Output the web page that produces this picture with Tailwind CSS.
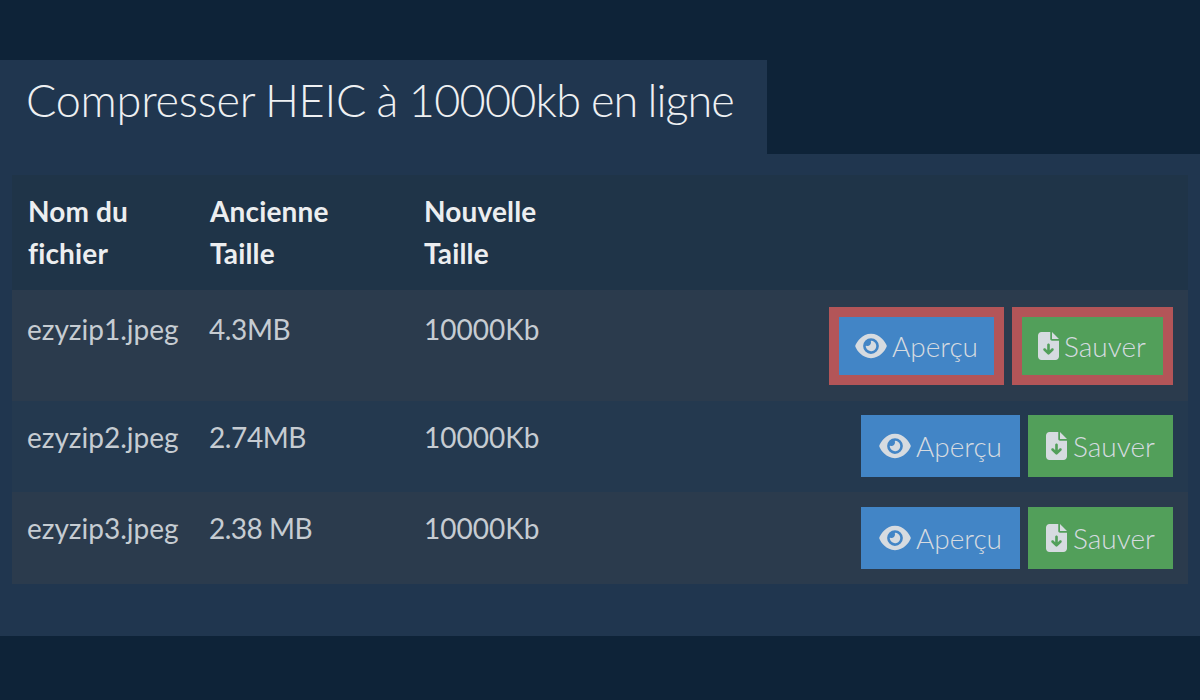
<!DOCTYPE html>
<html lang="fr">
<head>
<meta charset="UTF-8">
<meta name="viewport" content="width=device-width, initial-scale=1.0">
<script src="https://cdn.jsdelivr.net/npm/@tailwindcss/browser@4"></script>
<title>Compresser HEIC</title>
</head>
<body class="h-[700px] overflow-hidden bg-[#0e2338] font-['Lato',sans-serif] pt-[60px]">
  <h1 class="w-[767px] h-[94px] pl-[26px] pt-[12px] bg-[#20364f] text-[45px] leading-[56px] [word-spacing:-1.5px] font-light text-[#eef0f2]"><span class="tracking-[-0.25px]">Compresser HEIC à</span> <span class="tracking-[-0.75px]">10000kb</span> <span class="tracking-[-1px] [word-spacing:-1px]">en ligne</span></h1>
  <div class="bg-[#20364f] h-[482px] px-[12px] pt-[21px]">
    <table class="w-[1176px] table-fixed border-collapse text-[28px] text-[#c6ccd2]">
      <thead>
        <tr class="h-[115px] bg-[#1f3448] text-left text-[#eceef0] font-bold leading-[42px] tracking-[0.15px]">
          <th class="w-[197px] pl-[16px] pr-[40px] pb-[2px] font-bold">Nom du fichier</th>
          <th class="w-[215px] pl-[1px] pr-[60px] pb-[2px] font-bold">Ancienne Taille</th>
          <th class="w-[200px] pr-[40px] pb-[2px] font-bold">Nouvelle Taille</th>
          <th></th>
        </tr>
      </thead>
      <tbody>
        <tr class="h-[111px] bg-[#2b3b4d] align-top">
          <td class="pl-[15px] pt-[19px] leading-[40px]">ezyzip1.jpeg</td>
          <td class="pt-[19px] leading-[40px] tracking-[-0.4px]">4.3MB</td>
          <td class="pt-[19px] leading-[40px]">10000Kb</td>
          <td class="pr-[15px] pt-[17px]">
            <div class="flex justify-end gap-[8px] text-[#d6dbe0]">
              <a class="flex items-center gap-[5px] w-[175px] h-[78px] pl-[16px] border-[10px] border-[#b35558] bg-[#4285c6] font-light">
                <svg class="w-[32px] h-[28px] fill-current" viewBox="0 0 576 512"><path d="M288 32c-80.8 0-145.5 36.8-192.6 80.6C48.6 156 17.3 208 2.5 243.7c-3.3 7.9-3.3 16.7 0 24.6C17.3 304 48.6 356 95.4 399.4C142.5 443.2 207.2 480 288 480s145.5-36.8 192.6-80.6c46.8-43.5 78.1-95.4 93-131.1c3.3-7.9 3.3-16.7 0-24.6c-14.9-35.7-46.2-87.7-93-131.1C433.5 68.8 368.8 32 288 32zM144 256a144 144 0 1 1 288 0 144 144 0 1 1 -288 0zm144-64c0 35.3-28.7 64-64 64c-7.1 0-13.9-1.2-20.3-3.3c-5.5-1.8-11.9 1.6-11.7 7.4c.3 6.9 1.3 13.8 3.2 20.7c13.7 51.2 66.4 81.6 117.6 67.9s81.6-66.4 67.9-117.6c-11.1-41.5-47.8-69.4-88.6-71.1c-5.8-.2-9.2 6.1-7.4 11.7c2.1 6.4 3.3 13.2 3.3 20.3z"/></svg>
                Aperçu
              </a>
              <a class="flex items-center gap-[5px] w-[161px] h-[78px] pl-[16px] border-[10px] border-[#b35558] bg-[#529f5a] font-light">
                <svg class="w-[21px] h-[28px] fill-current" viewBox="0 0 384 512"><path d="M64 0C28.7 0 0 28.7 0 64V448c0 35.3 28.7 64 64 64H320c35.3 0 64-28.7 64-64V160H256c-17.7 0-32-14.3-32-32V0H64zM256 0V128H384L256 0zM216 232V334.1l31-31c9.4-9.4 24.6-9.4 33.9 0s9.4 24.6 0 33.9l-72 72c-9.4 9.4-24.6 9.4-33.9 0l-72-72c-9.4-9.4-9.4-24.6 0-33.9s24.6-9.4 33.9 0l31 31V232c0-13.3 10.7-24 24-24s24 10.7 24 24z"/></svg>
                Sauver
              </a>
            </div>
          </td>
        </tr>
        <tr class="h-[91px] bg-[#24394f] align-top">
          <td class="pl-[15px] pt-[16px] leading-[40px]">ezyzip2.jpeg</td>
          <td class="pt-[16px] leading-[40px] tracking-[-0.4px]">2.74MB</td>
          <td class="pt-[16px] leading-[40px]">10000Kb</td>
          <td class="pr-[15px] pt-[14px]">
            <div class="flex justify-end gap-[8px] text-[#d6dbe0]">
              <a class="flex items-center gap-[5px] w-[159px] h-[62px] pl-[18px] bg-[#4285c6] font-light">
                <svg class="w-[32px] h-[28px] fill-current" viewBox="0 0 576 512"><path d="M288 32c-80.8 0-145.5 36.8-192.6 80.6C48.6 156 17.3 208 2.5 243.7c-3.3 7.9-3.3 16.7 0 24.6C17.3 304 48.6 356 95.4 399.4C142.5 443.2 207.2 480 288 480s145.5-36.8 192.6-80.6c46.8-43.5 78.1-95.4 93-131.1c3.3-7.9 3.3-16.7 0-24.6c-14.9-35.7-46.2-87.7-93-131.1C433.5 68.8 368.8 32 288 32zM144 256a144 144 0 1 1 288 0 144 144 0 1 1 -288 0zm144-64c0 35.3-28.7 64-64 64c-7.1 0-13.9-1.2-20.3-3.3c-5.5-1.8-11.9 1.6-11.7 7.4c.3 6.9 1.3 13.8 3.2 20.7c13.7 51.2 66.4 81.6 117.6 67.9s81.6-66.4 67.9-117.6c-11.1-41.5-47.8-69.4-88.6-71.1c-5.8-.2-9.2 6.1-7.4 11.7c2.1 6.4 3.3 13.2 3.3 20.3z"/></svg>
                Aperçu
              </a>
              <a class="flex items-center gap-[6px] w-[145px] h-[62px] pl-[18px] bg-[#529f5a] font-light">
                <svg class="w-[21px] h-[28px] fill-current" viewBox="0 0 384 512"><path d="M64 0C28.7 0 0 28.7 0 64V448c0 35.3 28.7 64 64 64H320c35.3 0 64-28.7 64-64V160H256c-17.7 0-32-14.3-32-32V0H64zM256 0V128H384L256 0zM216 232V334.1l31-31c9.4-9.4 24.6-9.4 33.9 0s9.4 24.6 0 33.9l-72 72c-9.4 9.4-24.6 9.4-33.9 0l-72-72c-9.4-9.4-9.4-24.6 0-33.9s24.6-9.4 33.9 0l31 31V232c0-13.3 10.7-24 24-24s24 10.7 24 24z"/></svg>
                Sauver
              </a>
            </div>
          </td>
        </tr>
        <tr class="h-[92px] bg-[#2b3b4d] align-top">
          <td class="pl-[15px] pt-[16px] leading-[40px]">ezyzip3.jpeg</td>
          <td class="pt-[16px] leading-[40px] tracking-[-0.5px]">2.38 MB</td>
          <td class="pt-[16px] leading-[40px]">10000Kb</td>
          <td class="pr-[15px] pt-[15px]">
            <div class="flex justify-end gap-[8px] text-[#d6dbe0]">
              <a class="flex items-center gap-[5px] w-[159px] h-[62px] pl-[18px] bg-[#4285c6] font-light">
                <svg class="w-[32px] h-[28px] fill-current" viewBox="0 0 576 512"><path d="M288 32c-80.8 0-145.5 36.8-192.6 80.6C48.6 156 17.3 208 2.5 243.7c-3.3 7.9-3.3 16.7 0 24.6C17.3 304 48.6 356 95.4 399.4C142.5 443.2 207.2 480 288 480s145.5-36.8 192.6-80.6c46.8-43.5 78.1-95.4 93-131.1c3.3-7.9 3.3-16.7 0-24.6c-14.9-35.7-46.2-87.7-93-131.1C433.5 68.8 368.8 32 288 32zM144 256a144 144 0 1 1 288 0 144 144 0 1 1 -288 0zm144-64c0 35.3-28.7 64-64 64c-7.1 0-13.9-1.2-20.3-3.3c-5.5-1.8-11.9 1.6-11.7 7.4c.3 6.9 1.3 13.8 3.2 20.7c13.7 51.2 66.4 81.6 117.6 67.9s81.6-66.4 67.9-117.6c-11.1-41.5-47.8-69.4-88.6-71.1c-5.8-.2-9.2 6.1-7.4 11.7c2.1 6.4 3.3 13.2 3.3 20.3z"/></svg>
                Aperçu
              </a>
              <a class="flex items-center gap-[6px] w-[145px] h-[62px] pl-[18px] bg-[#529f5a] font-light">
                <svg class="w-[21px] h-[28px] fill-current" viewBox="0 0 384 512"><path d="M64 0C28.7 0 0 28.7 0 64V448c0 35.3 28.7 64 64 64H320c35.3 0 64-28.7 64-64V160H256c-17.7 0-32-14.3-32-32V0H64zM256 0V128H384L256 0zM216 232V334.1l31-31c9.4-9.4 24.6-9.4 33.9 0s9.4 24.6 0 33.9l-72 72c-9.4 9.4-24.6 9.4-33.9 0l-72-72c-9.4-9.4-9.4-24.6 0-33.9s24.6-9.4 33.9 0l31 31V232c0-13.3 10.7-24 24-24s24 10.7 24 24z"/></svg>
                Sauver
              </a>
            </div>
          </td>
        </tr>
      </tbody>
    </table>
  </div>
</body>
</html>
